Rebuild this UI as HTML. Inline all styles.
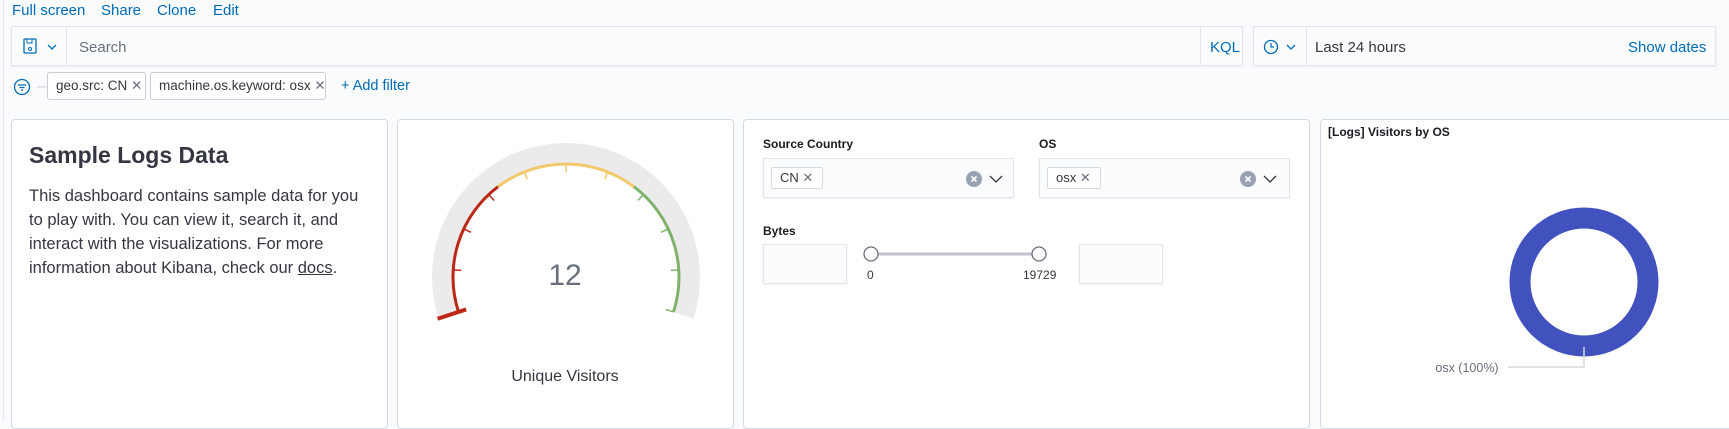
<!DOCTYPE html>
<html><head><meta charset="utf-8"><style>
*{box-sizing:border-box;margin:0;padding:0}
body{width:1729px;height:420px;overflow:hidden;background:#fafbfd;font-family:"Liberation Sans",sans-serif;position:relative;color:#343741}
.a{position:absolute;white-space:nowrap}
.link{color:#006bb8;font-size:15px}
.panel{position:absolute;background:#fff;border:1px solid #d3dae6;border-radius:4px}
.box{position:absolute;background:#fbfcfd;border:1px solid #e0e5ee;box-shadow:0 1px 2px rgba(0,0,0,.06)}
.pill{position:absolute;background:#fff;border:1px solid #c9ced6;border-radius:3px;font-size:13.5px;color:#343741;height:28px;line-height:26px;padding-left:8px;white-space:nowrap}
.tag{position:absolute;background:#fff;border:1px solid #d3dae6;border-radius:2px;font-size:13px;height:22px;line-height:20px;padding-left:8px;white-space:nowrap}
.lbl{position:absolute;font-size:12px;font-weight:bold;color:#1a1c21;white-space:nowrap}
</style></head><body>
<div class="a" style="left:3px;top:0;width:1px;height:420px;background:#e3e6ec"></div>
<div class="a link" style="left:12px;top:2px">Full screen</div>
<div class="a link" style="left:101px;top:2px">Share</div>
<div class="a link" style="left:157px;top:2px">Clone</div>
<div class="a link" style="left:213px;top:2px">Edit</div>

<div class="box" style="left:11px;top:26px;width:1232px;height:40px">
  <svg class="a" style="left:10px;top:11px" width="44" height="18" viewBox="0 0 44 18"><rect x="2" y="1" width="12" height="14" rx="1" fill="none" stroke="#006bb8" stroke-width="1.3"/><rect x="5" y="1" width="5" height="4" fill="none" stroke="#006bb8"/><circle cx="8" cy="11" r="1.5" fill="none" stroke="#006bb8"/><path d="M26 7l4 4 4-4" fill="none" stroke="#006bb8" stroke-width="1.3"/></svg>
  <div class="a" style="left:54px;top:0;width:1px;height:38px;background:#e0e5ee"></div>
  <div class="a" style="left:67px;top:12px;font-size:15px;color:#69707d">Search</div>
  <div class="a" style="left:1188px;top:0;width:1px;height:38px;background:#e0e5ee"></div>
  <div class="a link" style="left:1198px;top:12px">KQL</div>
</div>
<div class="box" style="left:1253px;top:26px;width:463px;height:40px">
  <svg class="a" style="left:9px;top:11px" width="40" height="18" viewBox="0 0 40 18"><circle cx="8" cy="9" r="6.5" fill="none" stroke="#006bb8" stroke-width="1.3"/><path d="M8 5v4h3" fill="none" stroke="#006bb8" stroke-width="1.2"/><path d="M24 7l4 4 4-4" fill="none" stroke="#006bb8" stroke-width="1.3"/></svg>
  <div class="a" style="left:52px;top:0;width:1px;height:38px;background:#e0e5ee"></div>
  <div class="a" style="left:61px;top:12px;font-size:15px;color:#343741">Last 24 hours</div>
  <div class="a link" style="left:374px;top:12px">Show dates</div>
</div>

<svg class="a" style="left:13px;top:78px" width="36" height="18" viewBox="0 0 36 18"><circle cx="9" cy="9" r="7.5" fill="none" stroke="#006bb8" stroke-width="1.3"/><path d="M5 7h8M6.5 9.5h5M8 12h2" stroke="#006bb8" stroke-width="1.2"/><path d="M24 9h10" stroke="#c9ced6"/></svg>
<div class="pill" style="left:47px;top:72px;width:99px">geo.src: CN <span style="color:#69707d">✕</span></div>
<div class="pill" style="left:150px;top:72px;width:176px">machine.os.keyword: osx <span style="color:#69707d">✕</span></div>
<div class="a link" style="left:341px;top:78px;font-size:14.5px">+ Add filter</div>

<div class="panel" style="left:11px;top:119px;width:377px;height:310px">
  <div class="a" style="left:17px;top:22px;font-size:23px;font-weight:bold;color:#343741">Sample Logs Data</div>
  <div class="a" style="left:17px;top:64px;width:343px;white-space:normal;font-size:16.5px;line-height:24px;color:#343741">This dashboard contains sample data for you to play with. You can view it, search it, and interact with the visualizations. For more information about Kibana, check our <u>docs</u>.</div>
</div>

<div class="panel" style="left:397px;top:119px;width:337px;height:310px"></div>
<svg class="a" style="left:397px;top:120px" width="337" height="300" viewBox="397 120 337 300">
  <circle cx="566" cy="277" r="123" fill="none" stroke="#ebebeb" stroke-width="22" stroke-dasharray="463.7 1000" transform="rotate(162 566 277)"/>
  <circle cx="566" cy="277" r="113" fill="none" stroke="#bd2717" stroke-width="3" stroke-dasharray="140 1000" transform="rotate(162 566 277)"/>
  <circle cx="566" cy="277" r="113" fill="none" stroke="#f1c96b" stroke-width="3" stroke-dasharray="146.5 1000" transform="rotate(233 566 277)"/>
  <circle cx="566" cy="277" r="113" fill="none" stroke="#7fb36c" stroke-width="3" stroke-dasharray="140 1000" transform="rotate(307 566 277)"/>
  <g stroke-width="1.5">
    <line x1="566" y1="142" x2="566" y2="172" stroke="#bd2717" transform="rotate(-108 566 277)" stroke-width="4"/>
    <line x1="566" y1="164" x2="566" y2="172" stroke="#bd2717" transform="rotate(-86.4 566 277)"/>
    <line x1="566" y1="164" x2="566" y2="172" stroke="#bd2717" transform="rotate(-64.8 566 277)"/>
    <line x1="566" y1="164" x2="566" y2="172" stroke="#bd2717" transform="rotate(-43.2 566 277)"/>
    <line x1="566" y1="164" x2="566" y2="172" stroke="#f1c96b" transform="rotate(-21.6 566 277)"/>
    <line x1="566" y1="164" x2="566" y2="172" stroke="#f1c96b"/>
    <line x1="566" y1="164" x2="566" y2="172" stroke="#f1c96b" transform="rotate(21.6 566 277)"/>
    <line x1="566" y1="164" x2="566" y2="172" stroke="#7fb36c" transform="rotate(43.2 566 277)"/>
    <line x1="566" y1="164" x2="566" y2="172" stroke="#7fb36c" transform="rotate(64.8 566 277)"/>
    <line x1="566" y1="164" x2="566" y2="172" stroke="#7fb36c" transform="rotate(86.4 566 277)"/>
    <line x1="566" y1="164" x2="566" y2="172" stroke="#7fb36c" transform="rotate(108 566 277)"/>
  </g>
  <text x="565" y="285" text-anchor="middle" font-family="Liberation Sans" font-size="30" fill="#69707d">12</text>
  <text x="565" y="381" text-anchor="middle" font-family="Liberation Sans" font-size="16" fill="#343741">Unique Visitors</text>
</svg>

<div class="panel" style="left:743px;top:119px;width:567px;height:310px"></div>
<div class="lbl" style="left:763px;top:137px">Source Country</div>
<div class="box" style="left:763px;top:158px;width:251px;height:40px">
  <div class="tag" style="left:7px;top:8px;width:52px">CN <span style="color:#69707d">✕</span></div>
  <svg class="a" style="left:202px;top:11px" width="44" height="18"><circle cx="8" cy="9" r="8" fill="#98a2b3"/><path d="M5.5 6.5l5 5M10.5 6.5l-5 5" stroke="#fff" stroke-width="1.6"/><path d="M24 6l6 6 6-6" fill="none" stroke="#343741" stroke-width="1.3"/></svg>
</div>
<div class="lbl" style="left:1039px;top:137px">OS</div>
<div class="box" style="left:1039px;top:158px;width:251px;height:40px">
  <div class="tag" style="left:7px;top:8px;width:54px">osx <span style="color:#69707d">✕</span></div>
  <svg class="a" style="left:200px;top:11px" width="44" height="18"><circle cx="8" cy="9" r="8" fill="#98a2b3"/><path d="M5.5 6.5l5 5M10.5 6.5l-5 5" stroke="#fff" stroke-width="1.6"/><path d="M24 6l6 6 6-6" fill="none" stroke="#343741" stroke-width="1.3"/></svg>
</div>
<div class="lbl" style="left:763px;top:224px">Bytes</div>
<div class="box" style="left:763px;top:244px;width:84px;height:40px"></div>
<div class="box" style="left:1079px;top:244px;width:84px;height:40px"></div>
<svg class="a" style="left:860px;top:244px" width="190" height="20"><line x1="11" y1="10" x2="179" y2="10" stroke="#c1c5cb" stroke-width="3"/><circle cx="11" cy="10" r="7" fill="#fff" stroke="#69707d" stroke-width="1.3"/><circle cx="179" cy="10" r="7" fill="#fff" stroke="#69707d" stroke-width="1.3"/></svg>
<div class="a" style="left:867px;top:268px;font-size:12px;color:#343741">0</div>
<div class="a" style="left:1023px;top:268px;font-size:12px;color:#343741">19729</div>

<div class="panel" style="left:1320px;top:119px;width:430px;height:310px"></div>
<div class="lbl" style="left:1328px;top:125px">[Logs] Visitors by OS</div>
<svg class="a" style="left:1400px;top:190px" width="300" height="200" viewBox="1400 190 300 200">
  <circle cx="1584" cy="282" r="64" fill="none" stroke="#4152bf" stroke-width="21"/>
  <path d="M1508 367H1584V347" fill="none" stroke="#d8d8d8" stroke-width="1.5"/>
  <text x="1467" y="372" text-anchor="middle" font-family="Liberation Sans" font-size="12.5" fill="#69707d">osx (100%)</text>
</svg>
</body></html>
